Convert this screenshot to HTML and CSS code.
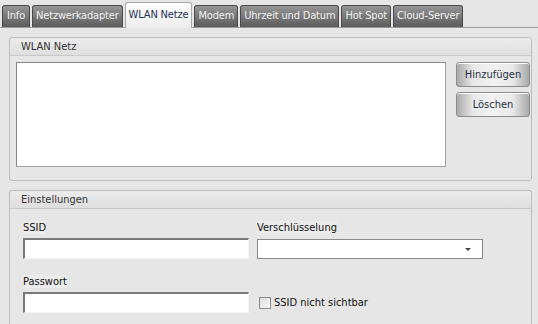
FILE: index.html
```html
<!DOCTYPE html>
<html lang="de">
<head>
<meta charset="utf-8">
<link rel="stylesheet" href="styles.css">
</head>
<body>
<div class="tabbar">
  <div class="tab">Info</div>
  <div class="tab">Netzwerkadapter</div>
  <div class="tab active">WLAN Netze</div>
  <div class="tab">Modem</div>
  <div class="tab">Uhrzeit und Datum</div>
  <div class="tab">Hot Spot</div>
  <div class="tab">Cloud-Server</div>
</div>
<div class="group g1">
  <div class="ghead">WLAN Netz</div>
  <div class="gbody netz">
    <div class="list"></div>
    <div class="btns">
      <div class="btn">Hinzufügen</div>
      <div class="btn">Löschen</div>
    </div>
  </div>
</div>
<div class="group g2">
  <div class="ghead">Einstellungen</div>
  <div class="gbody form">
    <div class="field">
      <span class="lbl">SSID</span>
      <div class="input"></div>
    </div>
    <div class="field">
      <span class="lbl">Verschlüsselung</span>
      <div class="select"><span class="arrow"></span></div>
    </div>
    <div class="field">
      <span class="lbl">Passwort</span>
      <div class="input"></div>
    </div>
    <div class="field chkfield">
      <label class="chk"><span class="box"></span>SSID nicht sichtbar</label>
    </div>
  </div>
</div>
</body>
</html>
```
FILE: styles.css
```css
html, body {
  margin: 0;
  padding: 0;
  background: #e6e6e6;
  font-family: "DejaVu Sans Condensed", "DejaVu Sans", sans-serif;
  font-size: 11px;
  color: #222;
  overflow: hidden;
}
body {
  height: 324px;
}
.tabbar {
  display: flex;
  align-items: flex-end;
  gap: 2px;
  height: 27px;
  padding-left: 2px;
  border-bottom: 1px solid #9a9a9a;
}
.tab {
  height: 22px;
  line-height: 20px;
  padding: 0 3px;
  box-sizing: border-box;
  border: 1px solid #4a4a4a;
  border-bottom: none;
  border-radius: 3px 3px 0 0;
  background: linear-gradient(#959595, #5c5c5c);
  color: #f2f2f2;
  letter-spacing: -0.17px;
}
.tab:first-child {
  padding: 0 4px;
}
.tab.active {
  line-height: 23px;
  padding: 0 3px;
  border-color: #a8a8a8;
  background: linear-gradient(#ffffff, #ececec);
  color: #1f2f55;
  margin-bottom: -1px;
  height: 26px;
}
.group {
  margin-left: 9px;
  width: 523px;
  box-sizing: border-box;
  border: 1px solid #bdbdbd;
  border-radius: 3px;
  background: #e6e6e6;
}
.g1 {
  margin-top: 9px;
  height: 144px;
}
.g2 {
  margin-top: 9px;
  height: 134px;
  border-bottom: none;
  border-radius: 3px 3px 0 0;
}
.ghead {
  height: 17px;
  line-height: 17px;
  padding-left: 11px;
  border-bottom: 1px solid #c8c8c8;
  background: linear-gradient(#ececec, #dedede);
  color: #333;
  border-radius: 3px 3px 0 0;
}
.netz {
  display: flex;
  gap: 10px;
  padding: 6px 0 0 6px;
}
.list {
  width: 430px;
  height: 105px;
  box-sizing: border-box;
  background: #fff;
  border: 1px solid #a0a0a0;
  border-top-color: #888;
  border-left-color: #888;
}
.btns {
  display: flex;
  flex-direction: column;
  gap: 5px;
}
.btn {
  width: 74px;
  height: 25px;
  box-sizing: border-box;
  border: 1px solid #8c8c8c;
  border-radius: 3px;
  background: linear-gradient(90deg, #a8a8a8 0%, #e8e8e8 22%, #f2f2f2 50%, #e8e8e8 78%, #a8a8a8 100%);
  box-shadow: inset 0 1px 0 #fff;
  text-align: center;
  line-height: 23px;
  color: #1f2f45;
}
.form {
  display: grid;
  grid-template-columns: 226px 226px;
  column-gap: 8px;
  row-gap: 16px;
  padding: 12px 0 0 13px;
}
.field {
  display: flex;
  flex-direction: column;
  gap: 4px;
}
.lbl {
  align-self: flex-start;
  line-height: 13px;
  background: #ececec;
  color: #111;
}
.input {
  height: 21px;
  box-sizing: border-box;
  background: #fff;
  border: 1px solid #f4f4f4;
  border-top: 2px solid #7a7a7a;
  border-left: 2px solid #7a7a7a;
}
.select {
  position: relative;
  margin-top: 1px;
  height: 20px;
  box-sizing: border-box;
  background: #fff;
  border: 1px solid #8a8a8a;
}
.arrow {
  position: absolute;
  right: 11px;
  top: 8px;
  width: 0;
  height: 0;
  border-left: 3px solid transparent;
  border-right: 3px solid transparent;
  border-top: 3px solid #444;
}
.chkfield {
  justify-content: flex-end;
  padding-bottom: 4px;
  padding-left: 2px;
}
.chk {
  display: flex;
  align-items: center;
  gap: 3px;
  color: #111;
}
.box {
  width: 12px;
  height: 12px;
  box-sizing: border-box;
  border: 1px solid #8a8a8a;
  background: linear-gradient(135deg, #dcdcdc, #f8f8f8);
}
```
